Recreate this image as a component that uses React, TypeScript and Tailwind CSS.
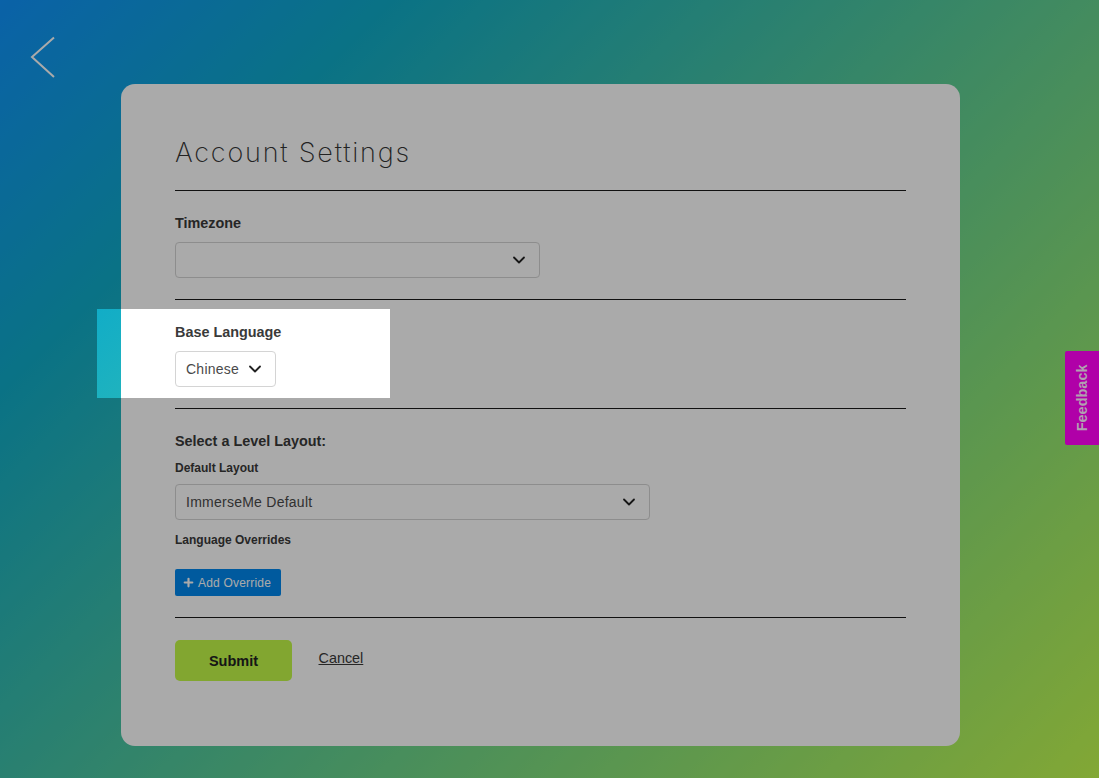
import { Plus, ChevronDown } from "lucide-react";

function Rule() {
  return <div className="h-px bg-[#1a1a1a] w-full" />;
}

function Select({ value, className }: { value?: string; className: string }) {
  return (
    <div className={`flex items-center justify-between h-9 rounded border border-[#d4d4d4] bg-white pl-[10px] pr-[10px] text-[14px] text-[#4a4a4a] tracking-[0.25px] ${className}`}>
      <span>{value}</span>
      <ChevronDown size={20} strokeWidth={2.2} className="text-[#222]" />
    </div>
  );
}

export default function App() {
  return (
    <div
      className="relative w-[1099px] h-[778px] overflow-hidden pl-[121px] pt-[84px] bg-[linear-gradient(135deg,#0f93fc_0%,#10acc8_21%,#c4fc50_100%)] font-['Liberation_Sans',sans-serif]"
    >
      <svg className="absolute left-[30px] top-[36px]" width="26" height="42" viewBox="0 0 26 42" fill="none">
        <path d="M24 1.5 L2 21 L24 41" stroke="#ffffff" strokeWidth="2" />
      </svg>

      <div className="w-[839px] h-[662px] rounded-[14px] bg-white px-[54px] pt-[51px] text-[#3a3a3a]">
        <h1 className="h-[36px] text-[27px] leading-[36px] font-[250] tracking-[1.8px] font-['Inter',sans-serif] text-[#333]">Account Settings</h1>
        <div className="mt-[19px]"><Rule /></div>

        <div className="mt-[24px] text-[14.4px] leading-[16px] font-bold">Timezone</div>
        <Select className="mt-[11px] w-[365px]" />
        <div className="mt-[21px]"><Rule /></div>

        <div className="mt-[24px] text-[14.4px] leading-[16px] font-bold">Base Language</div>
        <Select value="Chinese" className="mt-[11px] w-[101px]" />
        <div className="mt-[21px]"><Rule /></div>

        <div className="mt-[24px] text-[14.4px] leading-[16px] font-bold">Select a Level Layout:</div>
        <div className="mt-[12px] text-[12px] leading-[14px] font-bold">Default Layout</div>
        <Select value="ImmerseMe Default" className="mt-[9px] w-[475px]" />
        <div className="mt-[13px] text-[12px] leading-[14px] font-bold">Language Overrides</div>

        <button className="mt-[22px] flex items-center gap-[3px] h-[27px] w-[106px] rounded-[2px] bg-[#0088ee] pl-[7px] text-[12px] text-white">
          <Plus size={13} strokeWidth={4} />
          <span className="tracking-[0.2px]">Add Override</span>
        </button>
        <div className="mt-[21px]"><Rule /></div>

        <div className="mt-[22px] flex items-start">
          <button className="h-[41px] w-[117px] rounded-[5px] bg-[#c4fa48] pt-[2px] text-[14.5px] font-bold text-[#222]">Submit</button>
          <a className="ml-[26.5px] mt-[9px] text-[14.4px] leading-[18px] underline text-[#3a3a3a]">Cancel</a>
        </div>
      </div>

      <div className="absolute left-[97px] top-[309px] w-[293px] h-[89px] shadow-[0_0_0_2000px_rgba(0,0,0,0.333)]" />

      <div className="absolute right-0 top-[351px] flex h-[94px] w-[34px] items-center justify-center rounded-l-[2px] bg-[#b000a8]">
        <span className="-rotate-90 text-[14.5px] font-bold text-[#b0a0b0] whitespace-nowrap">Feedback</span>
      </div>
    </div>
  );
}
